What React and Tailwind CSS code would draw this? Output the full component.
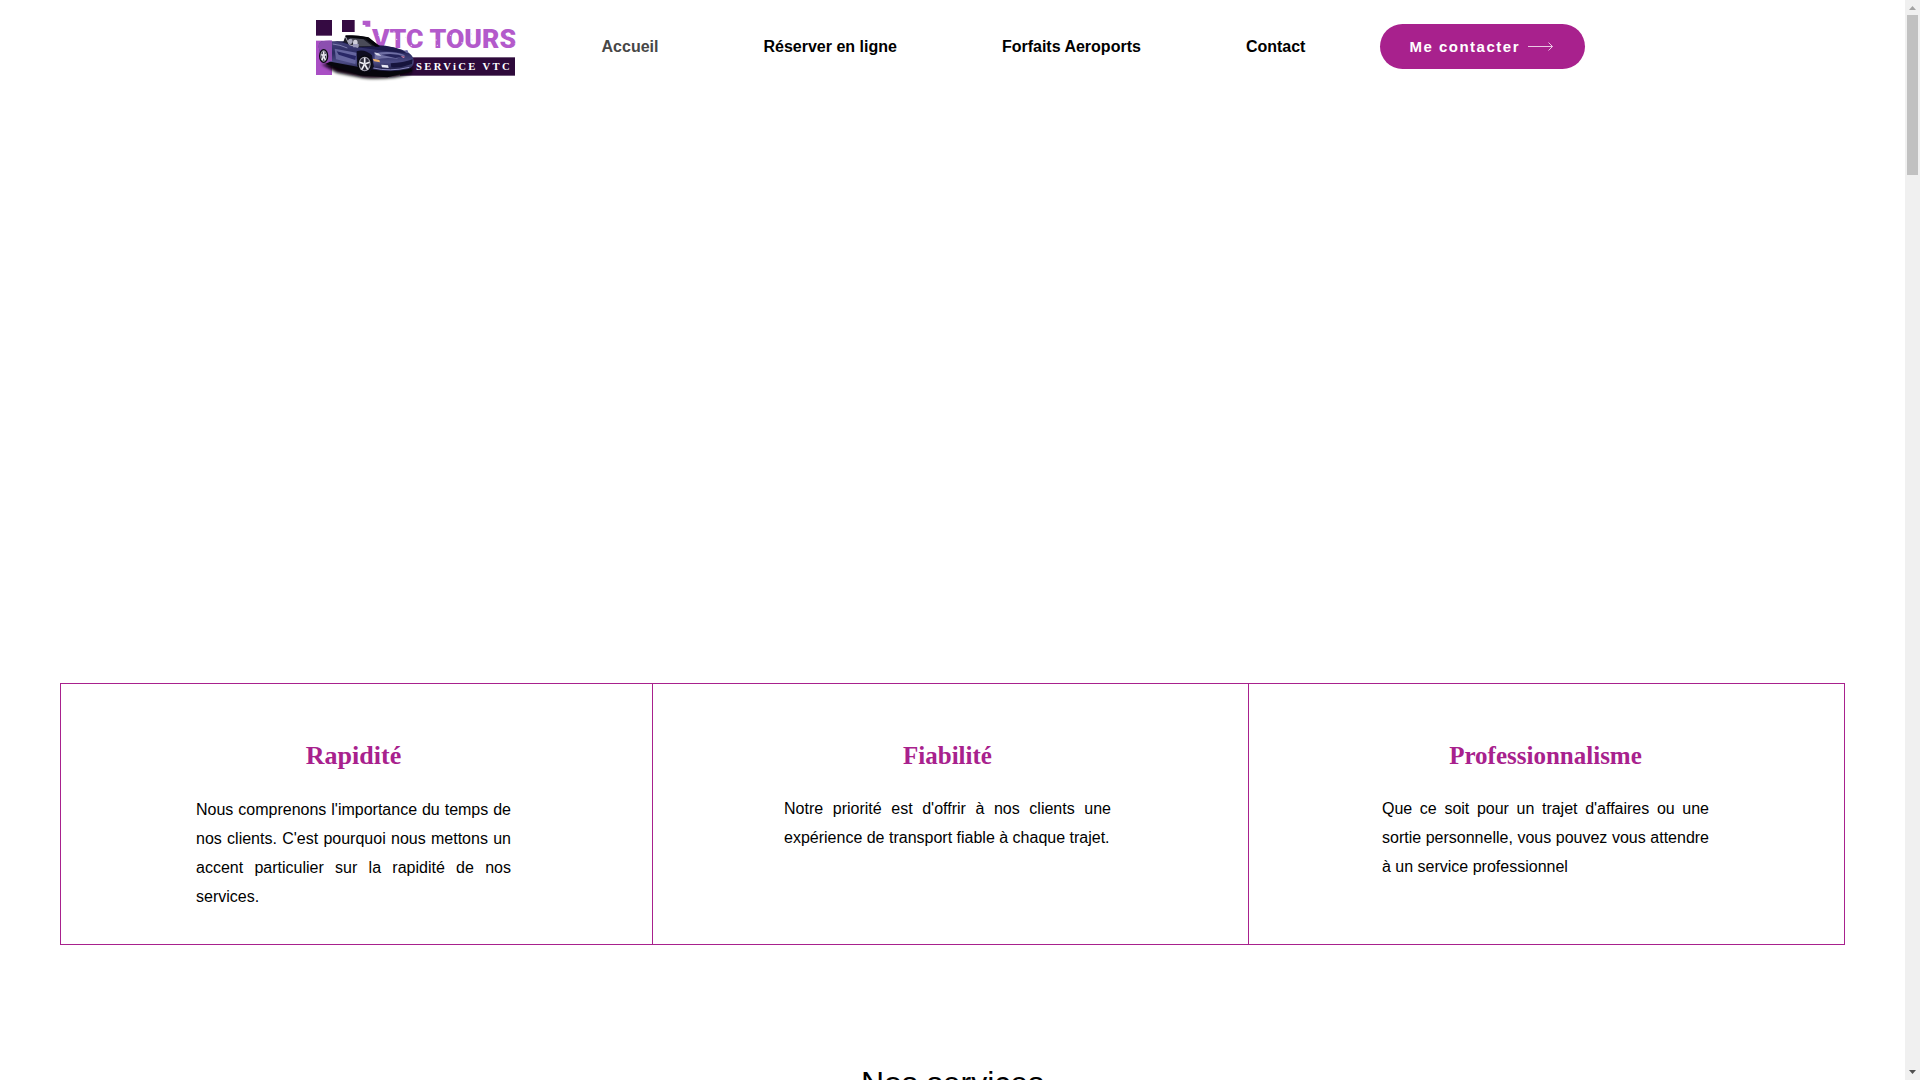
const navLinks = [
  { label: "Accueil", active: true },
  { label: "Réserver en ligne" },
  { label: "Forfaits Aeroports" },
  { label: "Contact" },
];

const features = [
  {
    title: "Rapidité",
    text: "Nous comprenons l'importance du temps de nos clients. C'est pourquoi nous mettons un accent particulier sur la rapidité de nos services.",
    box: "border-x pl-[135px] pr-[141px]",
    heading: "text-[26px] leading-[30px]",
  },
  {
    title: "Fiabilité",
    text: "Notre priorité est d'offrir à nos clients une expérience de transport fiable à chaque trajet.",
    box: "border-r pl-[131px] pr-[137px]",
    heading: "text-[25px] leading-[29px]",
  },
  {
    title: "Professionnalisme",
    text: "Que ce soit pour un trajet d'affaires ou une sortie personnelle, vous pouvez vous attendre à un service professionnel",
    box: "border-r pl-[133px] pr-[135px]",
    heading: "text-[25px] leading-[29px]",
  },
];

function Wheel({ cx, cy, rx, ry }) {
  return (
    <g>
      <ellipse cx={cx} cy={cy} rx={rx + 4} ry={ry + 4} fill="#08080f" />
      <ellipse cx={cx} cy={cy} rx={rx} ry={ry} fill="#a5a3b3" />
      <ellipse cx={cx} cy={cy} rx={rx - 3} ry={ry - 3} fill="#2b2938" />
      <g stroke="#f1f0f6" strokeWidth="5">
        <path d={`M${cx} ${cy}V${cy - ry + 3}`} />
        <path d={`M${cx} ${cy}L${cx - rx + 3} ${cy - 5}`} />
        <path d={`M${cx} ${cy}L${cx + rx - 3} ${cy - 5}`} />
        <path d={`M${cx} ${cy}L${cx - rx / 2} ${cy + ry - 5}`} />
        <path d={`M${cx} ${cy}L${cx + rx / 2} ${cy + ry - 5}`} />
      </g>
      <circle cx={cx} cy={cy} r="4" fill="#d9d8e2" />
    </g>
  );
}

function Logo() {
  return (
    <svg viewBox="48 42 618 210" className="h-[70px] w-[206px]" role="img" aria-label="VTC Tours, service VTC">
      <defs>
        <linearGradient id="body" x1="0" y1="0" x2="0" y2="1">
          <stop offset="0" stopColor="#45447c" />
          <stop offset="0.4" stopColor="#2a2a60" />
          <stop offset="0.7" stopColor="#4d4d86" />
          <stop offset="1" stopColor="#17153a" />
        </linearGradient>
        <filter id="soft" x="-20%" y="-50%" width="140%" height="200%">
          <feGaussianBlur stdDeviation="5" />
        </filter>
      </defs>
      <rect x="48" y="60" width="48" height="47" fill="#350a42" />
      <rect x="126" y="60" width="38" height="36" fill="#350a42" />
      <path d="M188 62h23v18h-15v-5h-8z" fill="#b35acb" />
      <rect x="48" y="122" width="48" height="103" fill="#a94fc4" />
      <rect x="300" y="172" width="345" height="55" fill="#2e0a3b" />
      <text x="216" y="145" fontFamily="Roboto, sans-serif" fontWeight="900" fontSize="80" fill="#b35acb">VTC TOURS</text>
      <g fill="#f0d9f6">
        <circle cx="236" cy="106" r="2" /><circle cx="242" cy="122" r="2" /><circle cx="282" cy="96" r="2" />
        <circle cx="290" cy="118" r="2" /><circle cx="318" cy="112" r="2" /><circle cx="334" cy="136" r="2" />
        <circle cx="408" cy="120" r="2" /><circle cx="412" cy="136" r="2" /><circle cx="452" cy="106" r="2" />
        <circle cx="486" cy="128" r="2" /><circle cx="514" cy="102" r="2" /><circle cx="516" cy="120" r="2" />
        <circle cx="570" cy="132" r="2" /><circle cx="622" cy="108" r="2" /><circle cx="646" cy="130" r="2" />
      </g>
      <text x="348" y="209" fontFamily="'Liberation Serif', serif" fontWeight="700" fontSize="32" letterSpacing="7" fill="#ffffff">SERViCE VTC</text>

      <path d="M64 192L110 218L190 234Q270 240 332 222L340 200L200 190Z" fill="#07060d" filter="url(#soft)" />
      <path d="M76 192L180 226L262 232L336 214L330 196L100 180Z" fill="#07060d" />
      <path d="M58 150Q52 128 66 124Q98 120 134 128L232 138Q290 138 322 156Q340 166 341 182Q342 202 322 208Q270 220 216 208L172 200L84 184Q62 176 58 150Z" fill="url(#body)" />
      <path d="M58 150Q52 128 66 124Q80 121 96 122V184L84 184Q62 176 58 150Z" fill="#8c4fb0" />
      <path d="M98 124L134 130L172 142L250 152L322 160Q280 136 234 136L150 124Z" fill="#1c1b4b" />
      <path d="M104 146L170 158L166 192L108 178Z" fill="#66669f" />
      <path d="M110 154L168 168L166 180L116 164Z" fill="#292866" />
      <path d="M224 160Q274 150 316 166L290 176Q254 170 224 180Z" fill="#6f6fa4" />
      <path d="M244 164Q286 158 316 170L286 174Z" fill="#25245c" />
      <path d="M130 126L136 108Q166 104 202 112L240 138L172 142Z" fill="#1b1b27" />
      <path d="M136 106Q168 104 206 112L240 140L226 140L196 118L138 111Z" fill="#05050a" />
      <path d="M150 114L190 118L216 138L176 139Z" fill="#4a4b58" />
      <path d="M136 110L148 134L174 142" fill="none" stroke="#b3b3c0" strokeWidth="3" />
      <ellipse cx="151" cy="124" rx="7" ry="8" fill="#a7a6ba" />
      <ellipse cx="166" cy="128" rx="7" ry="9" fill="#d0cfdb" />
      <path d="M158 132h18v10h-16z" fill="#9998b8" />
      <path d="M98 132Q120 134 142 144" fill="none" stroke="#a3a2ce" strokeWidth="2" />
      <path d="M170 154Q194 146 216 166L222 202L208 216L172 198Z" fill="#0e0d20" />
      <Wheel cx={71} cy={168} rx={10} ry={17} />
      <Wheel cx={194} cy={192} rx={18} ry={22} />
      <path d="M222 158Q234 156 244 168L230 166Z" fill="#d5d5e9" />
      <path d="M218 176L238 180L240 187L222 184Z" fill="#efb36b" />
      <path d="M244 194L264 196L266 204L246 202Z" fill="#e9e9f4" />
      <path d="M272 190Q310 188 338 178L336 192Q304 204 274 202Z" fill="#16143c" />
      <path d="M220 204Q270 216 328 202" fill="none" stroke="#8b8ac0" strokeWidth="3" />
      <path d="M302 168L316 170L310 174Z" fill="#d986a6" />
      <path d="M312 152L322 150L326 160L318 158Z" fill="#6565a0" />
    </svg>
  );
}

function Scrollbar() {
  return (
    <div aria-hidden="true" className="flex h-full w-[15px] shrink-0 flex-col items-center bg-[#f0f0f0]">
      <svg viewBox="0 0 15 15" className="size-[15px] shrink-0">
        <path d="M4 10h7L7.500 6z" fill="#a3a3a3" />
      </svg>
      <div className="h-40 w-[11px] bg-[#c1c1c1]" />
      <svg viewBox="0 0 15 15" className="mt-auto size-[15px] shrink-0">
        <path d="M4 5h7L7.500 9z" fill="#505050" />
      </svg>
    </div>
  );
}

export default function App() {
  return (
    <div className="flex h-screen overflow-hidden bg-white font-['Liberation_Sans',Arial,sans-serif] text-base text-black">
      <div className="min-w-0 flex-1 overflow-hidden">
        <header className="flex justify-center pt-[14px] pr-1">
          <a href="#accueil" className="mr-20 block">
            <Logo />
          </a>
          <nav className="mr-[75px] flex h-[65px] items-center gap-[105px] font-bold" aria-label="Navigation principale">
            {navLinks.map((link) => (
              <a key={link.label} href="#page" className={link.active ? "text-[#474747]" : ""}>
                {link.label}
              </a>
            ))}
          </nav>
          <button
            type="button"
            className="mt-[10px] flex h-[45px] w-[205px] items-center gap-2 rounded-full bg-[#a8218d] pl-[29px] text-[15px] leading-[23px] font-bold tracking-widest whitespace-nowrap text-white"
          >
            Me contacter
            <svg viewBox="0 0 26 10" className="h-[10px] w-[26px] shrink-0" fill="none" stroke="#eac9e4">
              <path d="M0 4.500h24.500M20.500 0.500l4 4L20.500 8.500" />
            </svg>
          </button>
        </header>

        <main>
          <section className="mx-[60px] mt-[599px] grid grid-cols-[593fr_596fr_596fr] border-y border-[#a8218d]">
            {features.map((feature) => (
              <article key={feature.title} className={`border-[#a8218d] pt-[57px] pb-[33px] ${feature.box}`}>
                <h2 className={`text-center font-['Liberation_Serif',serif] font-bold text-[#a8218d] ${feature.heading}`}>
                  {feature.title}
                </h2>
                <p className="mt-6 text-justify leading-[29px]">{feature.text}</p>
              </article>
            ))}
          </section>
          <h2 className="mt-[119px] text-center text-[32px] leading-[38px]">Nos services</h2>
        </main>
      </div>
      <Scrollbar />
    </div>
  );
}
